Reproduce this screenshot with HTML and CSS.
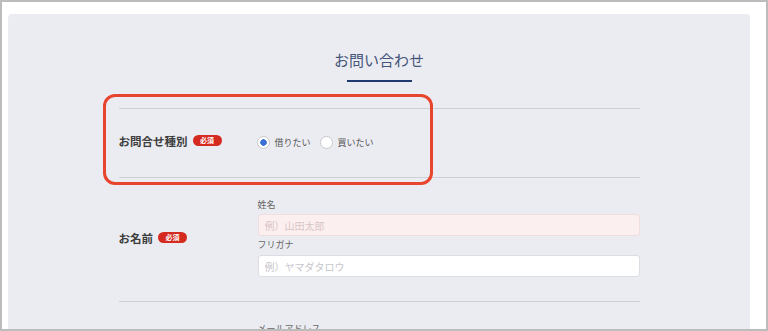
FILE: index.html
```html
<!DOCTYPE html>
<html>
<head lang="ja">
    <meta charset="UTF-8">
    <title>お問い合わせ</title>
    <link rel="stylesheet" href="styles.css">
</head>
<body>
<div id="frame">
    <div id="panel">
        <h1 class="title">お問い合わせ</h1>
        <div class="title-line"></div>
        <div class="form">
            <div class="row row-type">
                <div class="row-label">お問合せ種別<span class="req">必須</span></div>
                <div class="radios">
                    <label class="radio"><input type="radio" name="kind" checked><span>借りたい</span></label>
                    <label class="radio"><input type="radio" name="kind"><span>買いたい</span></label>
                </div>
            </div>
            <div class="row row-name">
                <div class="row-label">お名前<span class="req">必須</span></div>
                <div class="fields">
                    <div class="field-label">姓名</div>
                    <input class="text error" type="text" placeholder="例）山田太郎">
                    <div class="field-label second">フリガナ</div>
                    <input class="text" type="text" placeholder="例）ヤマダタロウ">
                </div>
            </div>
            <div class="row row-mail">
                <div class="row-label"></div>
                <div class="fields">
                    <div class="field-label">メールアドレス</div>
                </div>
            </div>
        </div>
    </div>
    <div class="mark"></div>
</div>
</body>
</html>
```

FILE: styles.css
```css
*{
    margin: 0;
    padding: 0;
    box-sizing: border-box;
}
html,body{
    background: #fff;
}
body{
    font-family: "Noto Sans CJK JP", "Noto Sans", sans-serif;
    color: #333;
}
#frame{
    position: relative;
    height: 331px;
    border: 2px solid #bcbcbc;
    padding: 12px 16px 0 6px;
    overflow: hidden;
    background: #fff;
}
#panel{
    height: 400px;
    background: #ebecf1;
    border-radius: 4px;
    padding-top: 35px;
}
.title{
    font-size: 15px;
    line-height: 22px;
    font-weight: normal;
    text-align: center;
    color: #45547a;
}
.title-line{
    width: 65px;
    height: 2px;
    margin: 9px auto 0;
    background: #1e3a6e;
}
.form{
    width: 521px;
    margin: 26px auto 0;
}
.row{
    display: flex;
    align-items: center;
    border-top: 1px solid #cfd0d6;
}
.row-type{
    height: 69px;
}
.row-type .row-label{
    margin-bottom: 5px;
}
.row-name{
    padding: 20px 0 24px;
}
.row-mail{
    padding-top: 20px;
    align-items: flex-start;
}
.row-label{
    width: 139px;
    flex-shrink: 0;
    display: flex;
    align-items: center;
    gap: 5px;
    font-size: 11.5px;
    font-weight: bold;
    color: #3d3d3d;
}
.req{
    display: inline-block;
    width: 29px;
    height: 11px;
    line-height: 11px;
    border-radius: 6px;
    background: #d52a1f;
    color: #fff;
    font-size: 7px;
    text-align: center;
}
.radios{
    display: flex;
    align-items: center;
    gap: 10px;
    margin-bottom: 2px;
}
.radio{
    display: flex;
    align-items: center;
    gap: 5px;
    font-size: 9px;
    color: #555;
}
.radio input{
    appearance: none;
    -webkit-appearance: none;
    width: 13px;
    height: 13px;
    margin-left: -1px;
    border: 1px solid #c9c9cd;
    border-radius: 50%;
    background: #fff;
}
.radio input:checked{
    background: radial-gradient(circle, #3b6fd6 0, #3b6fd6 3px, #fff 3.5px);
}
.fields{
    flex: 1;
}
.field-label{
    font-size: 9px;
    line-height: 14px;
    color: #666;
    margin-bottom: 2px;
}
.field-label.second{
    margin-top: 2px;
    margin-bottom: 3px;
}
.text{
    display: block;
    width: 100%;
    height: 22px;
    padding: 0 6px;
    border: 1px solid #dcdde2;
    border-radius: 3px;
    background: #fff;
    font-family: inherit;
    font-size: 10px;
    outline: none;
}
.text::placeholder{
    color: #c6c6cb;
}
.text.error{
    background: #fcefef;
    border-color: #f0dddd;
}
.text.error::placeholder{
    color: #d8c4c6;
}
.mark{
    position: absolute;
    left: 101px;
    top: 92px;
    width: 330px;
    height: 91px;
    border: 3px solid #e8452f;
    border-radius: 12px;
}
```
